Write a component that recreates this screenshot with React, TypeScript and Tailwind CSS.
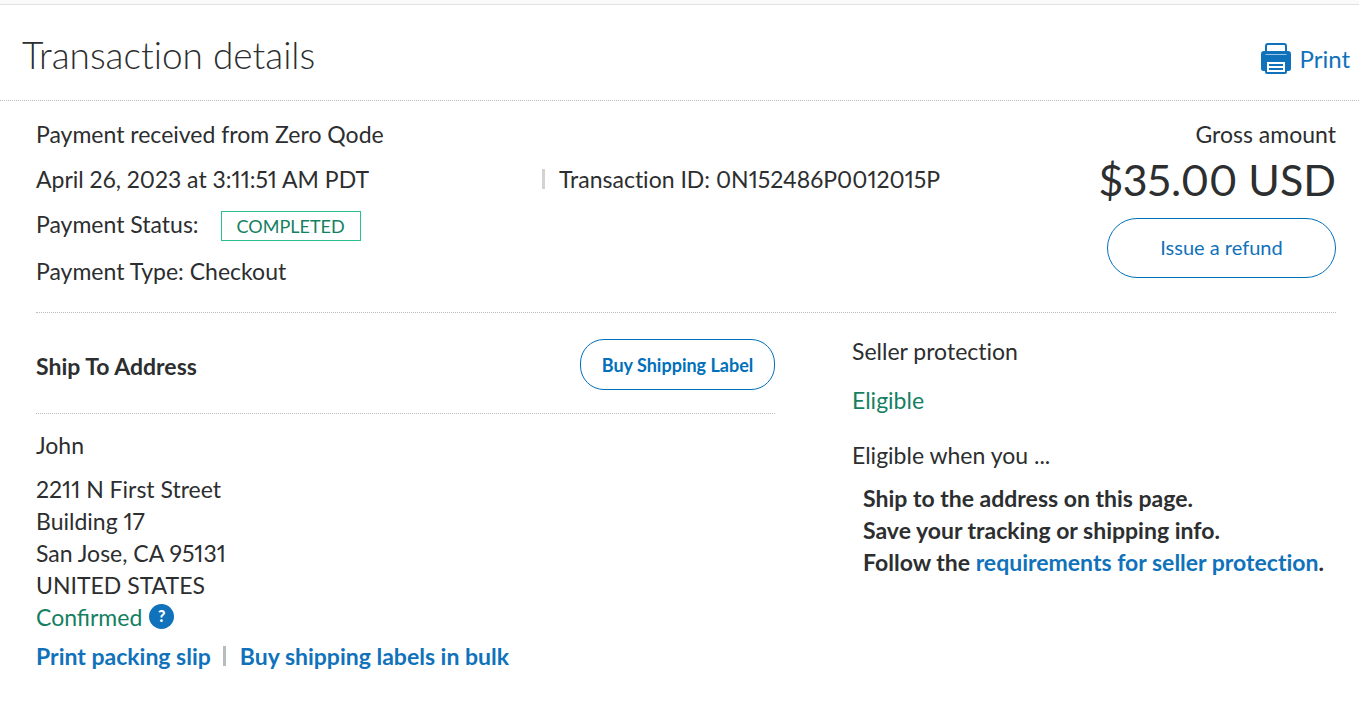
const addressLines = ["2211 N First Street", "Building 17", "San Jose, CA 95131", "UNITED STATES"];

function PrinterIcon() {
  return (
    <svg className="h-8 w-[30px]" viewBox="0 0 30 32" fill="none" aria-hidden="true">
      <path d="M5 9V3Q5 1 7 1H23Q25 1 25 3V9" stroke="#1072ba" strokeWidth="2" />
      <path d="M3 8H27Q30 8 30 11V25.500Q30 28 27.500 28H26V29Q26 31 24 31H6Q4 31 4 29V28H2.500Q0 28 0 25.500V11Q0 8 3 8Z" fill="#1072ba" />
      <path d="M4.500 11.500H25.500" stroke="#9cc5e3" />
      <path d="M6 19H24V29H6Z" fill="#fff" />
      <path d="M8 22H22M8 26H22" stroke="#1072ba" strokeWidth="2" />
    </svg>
  );
}

export default function App() {
  return (
    <div className="min-h-screen bg-white font-['Lato','Liberation_Sans',sans-serif] text-[23px] leading-8 text-[#2c2e2f] proportional-nums">
      <div className="h-[5px] border-b border-[#e1e1e1] bg-[#fafafa]" />

      <header className="flex h-24 items-center justify-between border-b border-dotted border-[#b7bcbf] pr-[9px] pl-[22px]">
        <h1 className="pt-1 text-[37px] leading-[44px] font-light [font-variant-ligatures:none]">Transaction details</h1>
        <a href="#print" className="flex items-center gap-2 pt-3 text-[#1072ba]">
          <PrinterIcon />
          <span className="text-[24px]">Print</span>
        </a>
      </header>

      <main className="pr-[23px] pl-9">
        <section className="flex justify-between border-b border-dotted border-[#b7bcbf] pt-[17px] pb-[25px]">
          <div className="flex flex-1 flex-col gap-[13px]">
            <p>Payment received from Zero Qode</p>
            <div className="flex items-center">
              <p className="w-[506px]">April 26, 2023 at 3:11:51 AM PDT</p>
              <span className="mr-[14px] h-5 w-[3px] bg-[#d3d3d6]" />
              <p className="[font-variant-ligatures:none]">Transaction ID: 0N152486P0012015P</p>
            </div>
            <div className="flex h-[34px] items-start gap-[22px]">
              <p>Payment Status:</p>
              <span className="mt-[3px] flex h-[30px] items-center border border-[#29bf91] px-[15px] text-[18px] text-[#157f62]">
                COMPLETED
              </span>
            </div>
            <p>Payment Type: Checkout</p>
          </div>
          <div className="flex flex-col items-end">
            <p>Gross amount</p>
            <p className="mt-[6px] text-[43px] leading-[48px]">$35.00 USD</p>
            <button type="button" className="mt-[14px] h-[60px] w-[229px] rounded-full border border-[#0070ba] pb-[2px] text-[20px] text-[#1072ba]">
              Issue a refund
            </button>
          </div>
        </section>

        <div className="flex">
          <section className="w-[739px]">
            <div className="flex items-center justify-between border-b border-dotted border-[#b7bcbf] pt-[26px] pb-[23px]">
              <h2 className="pt-[2px] font-bold">Ship To Address</h2>
              <button type="button" className="h-[51px] w-[195px] rounded-3xl border border-[#0070ba] text-[18px] font-bold text-[#0070ba]">
                Buy Shipping Label
              </button>
            </div>
            <p className="mt-[15px]">John</p>
            <address className="mt-3 not-italic">
              {addressLines.map((line) => (
                <span key={line} className="block">{line}</span>
              ))}
            </address>
            <p className="flex items-center gap-[7px] text-[#157f62]">
              Confirmed
              <button type="button" aria-label="About confirmed addresses" className="mb-[2px] flex size-[25px] items-center justify-center rounded-full bg-[#1072ba] text-[16px] font-black text-white">
                ?
              </button>
            </p>
            <nav className="mt-[7px] flex items-center font-bold text-[#1072ba]">
              <a href="#packing-slip">Print packing slip</a>
              <span className="mr-[14px] ml-3 h-5 w-[3px] bg-[#b7bcbf]" />
              <a href="#bulk-labels">Buy shipping labels in bulk</a>
            </nav>
          </section>

          <section className="ml-[77px] flex-1 pt-[22px] [font-variant-ligatures:none]">
            <h2>Seller protection</h2>
            <p className="mt-[17px] text-[#157f62]">Eligible</p>
            <p className="mt-[23px]">Eligible when you ...</p>
            <ul className="mt-[11px] ml-[11px] font-bold whitespace-nowrap">
              <li>Ship to the address on this page.</li>
              <li>Save your tracking or shipping info.</li>
              <li>
                Follow the <a href="#requirements" className="text-[#1072ba]">requirements for seller protection</a>.
              </li>
            </ul>
          </section>
        </div>
      </main>
    </div>
  );
}
